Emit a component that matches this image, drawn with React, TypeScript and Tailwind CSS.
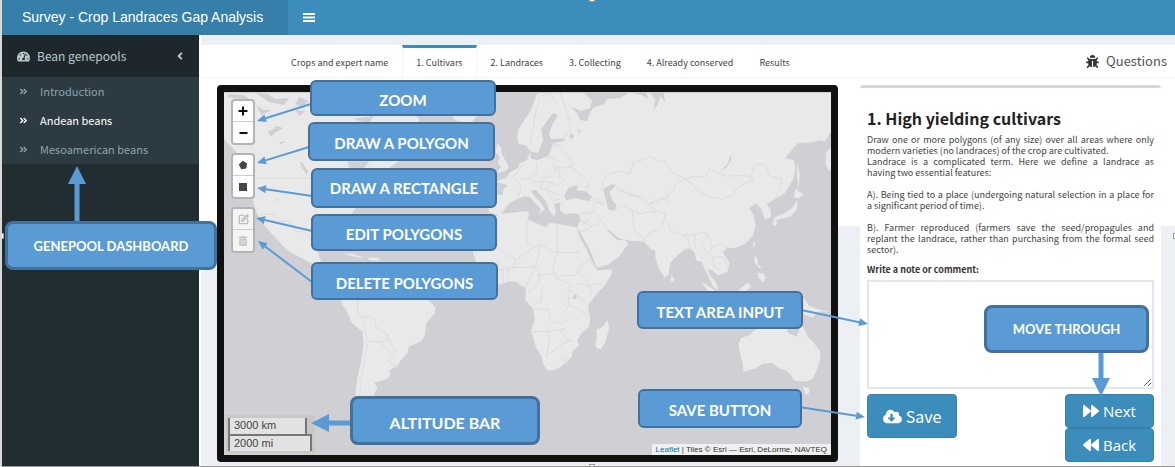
import type { ReactNode } from 'react';
import { SquarePen } from 'lucide-react';
import {
  FaAngleDoubleRight,
  FaAngleLeft,
  FaBackward,
  FaBug,
  FaCloudDownloadAlt,
  FaForward,
  FaTachometerAlt,
  FaTrashAlt,
} from 'react-icons/fa';

const land = [
  // North America
  'M224 93H400L420 120L400 160L380 175L353 212L350 225L340 235L325 238L318 250L322 262L330 270L322 268L303 258L293 253L287 249L275 236L265 225L257 212L253 197L252 175L240 155L224 138Z',
  'M269 223L274 226L279 234L288 246L284 244L277 235Z',
  'M430 85L485 93L482 108L476 118L470 124L455 120Z',
  'M343 253L352 253L364 257L358 257Z',
  'M368 257L378 257L382 260L370 260Z',
  // South America
  'M342 300L343 305L346 308L352 322L363 331L364 343L362 358L358 376L356 392L358 405L373 405L375 392L378 388L375 382L388 378L391 374L389 370L398 365L401 360L408 352L409 346L421 341L425 335L427 322L435 313L436 307L432 303L425 296L400 288L360 284L348 290Z',
  // Eurasia
  'M537 93L534 102L530 112L523 122L518 130L517 138L519 144L526 145L530 151L527 160L520 163L518 168L510 172L506 178L499 180L497 182L508 185L503 190L503 195L494 194L488 198L489 212L500 215L505 209L509 203L517 199L524 196L530 197L536 204L541 209L539 214L545 209L541 203L534 195L531 190L536 190L541 196L546 201L549 210L554 216L556 211L554 204L560 202L560 210L565 214L572 213L579 214L580 220L577 227L581 234L590 250L595 263L597 267L608 264L619 256L628 243L624 239L617 240L613 236L606 229L610 230L617 237L627 240L643 241L650 248L655 250L655 257L658 267L664 277L668 274L670 262L678 254L686 248L690 248L694 252L696 260L701 261L706 272L712 285L718 291L716 283L709 274L707 268L712 270L718 275L727 271L729 262L722 252L727 247L734 248L745 243L752 235L755 226L753 215L749 208L755 203L761 209L764 219L770 217L770 210L766 204L775 198L784 193L793 178L795 166L793 160L784 158L791 150L797 143L812 142L818 140L824 141L831 131V93Z',
  // Africa
  'M500 214L507 213L525 211L529 212L528 219L534 222L546 227L549 223L556 223L564 225L577 227L579 236L586 248L590 257L597 270L611 269L612 272L606 283L597 293L589 303L588 309L590 317L589 326L581 333L577 340L579 345L573 350L571 357L561 366L555 369L547 370L543 363L541 355L536 347L531 330L535 318L533 308L525 299L526 288L521 285L516 281L510 281L500 284L491 281L478 266L473 252L477 240L484 226L494 217Z',
  'M607 319L609 327L605 342L601 348L597 348L595 344L597 336L596 329L603 326Z',
  // British Isles
  'M497 143L501 147L502 154L506 161L509 167L505 171L496 173L501 167L498 162L500 157L496 152Z',
  // East and South-East Asia
  'M795 188L799 192L803 194L798 198L793 197Z',
  'M797 199L796 209L790 216L779 219L773 221L774 217L784 213L791 208Z',
  'M773 220L777 222L774 226L772 224Z',
  'M797 161L799 174L798 189L796 175Z',
  'M831 145L825 154L825 164L828 171L831 168Z',
  'M754 241L755 243L753 247L752 244Z',
  'M754 255L757 258L757 264L762 267L758 267L754 262Z',
  'M757 272L763 273L765 277L763 282L758 278Z',
  'M671 274L674 279L672 282L670 280Z',
  'M700 281L706 284L716 291H708Z',
  'M737 290L748 282L750 287L745 291Z',
  'M803 297L808 305L818 309L829 311L818 311L812 317L803 314Z',
  // Australia
  'M738 342L741 337L750 334L753 330L758 327L763 328L769 326L786 327L787 332L796 336L800 325L803 327L807 336L813 342L819 350L820 357L817 367L812 378L805 381L794 380L790 374L786 370L779 368L771 362L762 363L754 368L743 371L742 362L739 351Z',
  'M802 386L809 387L808 393L805 394Z',
];

const water = [
  'M584 93H628L620 98L607 99L604 104L593 108L589 114L587 121L580 120L577 113L571 107L581 111L590 108L592 101Z',
  'M633 93H646L648 99L641 95Z',
  'M650 93H663L665 103L660 96L657 105L653 110L655 100Z',
  'M553 113L558 115L552 125L549 134L551 139L565 138L564 141L553 143L551 149L548 156L537 160L531 158L530 151L538 153L543 140L541 129L547 121Z',
  'M564 196L568 188L575 185L578 186L576 190L586 191L592 197L588 201L576 198L566 200Z',
  'M603 189L611 184L616 185L609 192L612 200L616 205L614 211L608 209L606 201Z',
  'M720 170L727 164L730 155L731 159L726 167Z',
  'M571 133L574 136L572 139L569 137Z',
  'M578 129L581 131L579 134Z',
  'M574 294L577 294L576 299L572 298Z',
  'M230 94L244 95L250 99L240 99L228 97Z',
  'M256 93L268 94L276 99L290 98L284 105L270 102Z',
  'M300 97L309 101L303 108L296 104Z',
  'M268 132L274 129L277 126L284 128L277 132L272 136Z',
  'M280 142L287 141L281 144Z',
  'M257 105L264 110L272 110L262 115Z',
  'M296 110L306 111L300 116Z',
  'M301 161L304 164L309 172L306 173L302 167Z',
  'M354 119L374 116L370 124Z',
  'M348 161L370 161L364 168H350Z',
];

const borders = [
  'M255 178H311M260 214L274 214L280 221L290 221L297 231L306 232L312 240',
  'M301 161L304 170L308 175M277 199L280 202',
  'M537 93L540 101L536 111L534 122L532 134L530 145M540 96L550 94L557 104M560 93L565 106L569 120L571 130L563 137',
  'M551 145L560 145L563 152L568 156L573 163L570 167L558 167L553 169M547 156L554 158L560 162M537 162L536 172L541 178L551 176L556 171L553 162',
  'M521 166L518 172L512 177L520 183L521 189L518 198M536 172L530 178L520 179M530 178L534 182L543 181L551 182L558 185L564 180L558 176M543 181L540 188L548 190L555 193L563 195M551 182L547 187L549 195L553 200L560 199M570 167L576 170L584 178L589 183L586 189M558 167L560 175',
  'M553 203L560 203L564 206M580 214L588 212L594 211L593 203L598 202L604 205M588 201L596 199L600 203L605 202M580 220L586 223L592 226L599 224M588 212L590 218L583 224M594 211L600 218L606 228M592 226L585 230L578 232',
  'M603 189L602 180L610 173L618 171L630 173L633 162L645 159L650 156L658 161L664 161L672 172L685 179M685 179L676 183L673 190L665 197L655 200L648 204M616 189L628 193L640 197L648 204L656 210L665 213L664 219L662 224L656 230L648 233L643 241',
  'M614 210L622 205L632 210L640 214L648 211L656 212M632 210L633 225L635 231L643 238M640 197L632 196L621 189M648 204L657 201L668 196M665 197L670 204',
  'M685 179L695 176L705 177L709 168L718 174L728 176L738 175L748 176L753 180L745 183L735 189L733 195L722 199L710 197L698 191L692 184Z',
  'M750 176L755 164L764 164L770 176L781 179L780 188L775 198M664 219L668 224L670 230L682 235L694 234L704 232L708 236L700 244L706 251L701 259M682 235L688 238L689 246M694 234L695 248M708 236L712 246L720 244L727 247M706 251L712 257L722 256L727 264M712 246L708 254M712 257L713 266L719 269',
  'M497 217L498 240L497 248L516 259L534 247L527 243L527 220M557 223V243L557 252H580M534 247L540 244L557 253M540 244L538 258L535 267L540 273M515 260L514 267L500 269L497 260M514 267L528 267L535 265M557 252L553 268L556 277L571 284M535 267L528 281L525 289M540 273L538 284L528 292M538 275L556 273M556 277L563 275L576 275L580 265L589 259L597 270M577 271L590 284L602 283M576 283L590 286L591 295M571 284L568 293L569 305L563 312M543 286L541 300L533 305M533 308L548 309L551 321L563 323L569 318M531 331L549 331L556 329L566 328M549 331V343L546 355L552 351L563 343L571 340M560 328L566 339L574 340M569 305L578 308L589 317M570 289L588 305M503 269V283M508 268V282',
  'M561 357L565 355L567 358L563 361Z',
  'M357 309L362 317L369 315L375 318L376 326L387 333L388 340L380 341L370 341L367 336L365 326L363 317M358 309L358 300L368 297M387 333L393 345L397 349L388 360M388 360L398 366M380 341L391 352L396 349M368 342L365 360L362 375L360 395',
];

function WorldMap() {
  return (
    <svg viewBox="224 92 607 362" preserveAspectRatio="xMidYMid slice" className="absolute inset-0 h-full w-full" aria-hidden="true">
      <rect x="0" y="0" width="1200" height="600" fill="#d0cfd3" />
      <g fill="#e9e9e9">{land.map((d) => <path key={d} d={d} />)}</g>
      <g fill="#d0cfd3">{water.map((d) => <path key={d} d={d} />)}</g>
      <g fill="none" stroke="#dadadb" strokeWidth="0.9" strokeLinejoin="round">{borders.map((d) => <path key={d} d={d} />)}</g>
    </svg>
  );
}

function Callout({ className, children }: { className: string; children: ReactNode }) {
  return (
    <div className={`absolute z-20 flex items-center justify-center border-[#41719c] bg-[#5b9bd5] font-[Lato,sans-serif] font-bold whitespace-nowrap text-white ${className}`}>
      {children}
    </div>
  );
}

/* Straight pointer with its head at (x2, y2). */
function Arrow({ x1, y1, x2, y2 }: { x1: number; y1: number; x2: number; y2: number }) {
  const len = Math.hypot(x2 - x1, y2 - y1);
  const ux = (x2 - x1) / len;
  const uy = (y2 - y1) / len;
  const bx = x2 - ux * 9;
  const by = y2 - uy * 9;
  return (
    <g fill="#5b9bd5" stroke="#5b9bd5">
      <line x1={x1} y1={y1} x2={bx} y2={by} strokeWidth="2" />
      <path stroke="none" d={`M${x2} ${y2}L${bx - uy * 4} ${by + ux * 4}L${bx + uy * 4} ${by - ux * 4}Z`} />
    </g>
  );
}

function MapButtons({ children }: { children: ReactNode }) {
  return <div className="flex w-6 flex-col divide-y divide-[#ccc] overflow-hidden rounded border-2 border-[#b4b4b6] bg-white">{children}</div>;
}

const tool = 'flex h-[21px] w-full items-center justify-center';

function MapPanel() {
  return (
    <section aria-label="Map" className="relative mb-1 min-w-0 flex-1 rounded-sm border-[7px] border-[#111]">
      <div className="absolute inset-0 overflow-hidden">
        <WorldMap />
      </div>
      <div className="absolute top-[7px] left-[7px] flex flex-col gap-2">
        <MapButtons>
          <button aria-label="Zoom in" className={tool}>
            <svg width="10" height="10" viewBox="0 0 10 10" stroke="#111" strokeWidth="2"><path d="M0.5 5H9.5M5 0.5V9.5" /></svg>
          </button>
          <button aria-label="Zoom out" className={tool}>
            <svg width="10" height="10" viewBox="0 0 10 10" stroke="#111" strokeWidth="2"><path d="M1.5 5H9.5" /></svg>
          </button>
        </MapButtons>
        <MapButtons>
          <button aria-label="Draw a polygon" className={tool}>
            <svg width="10" height="10" viewBox="0 0 10 10" fill="#464646"><path d="M4.8 0.7L9.2 3.4L8.2 8.6L3.2 9.3L0.8 4.6Z" /></svg>
          </button>
          <button aria-label="Draw a rectangle" className={tool}>
            <svg width="8" height="8" viewBox="0 0 8 8" fill="#464646"><path d="M0 0H8V8H0Z" /></svg>
          </button>
        </MapButtons>
        <MapButtons>
          <button aria-label="Edit polygons" className={`${tool} bg-[#f4f4f4] text-[#bdbdbd]`}><SquarePen size={11} strokeWidth={3} /></button>
          <button aria-label="Delete polygons" className={`${tool} bg-[#f4f4f4] text-[#c4c4c4]`}><FaTrashAlt size={10} /></button>
        </MapButtons>
      </div>
      <div className="absolute bottom-[2px] left-[2px] bg-[#c8c8c8] p-[2px] pt-[3px] pr-[3px] font-['Liberation_Sans',sans-serif] text-[11px] leading-[15px] text-[#444]">
        <div className="h-4 w-[79px] border-x-2 border-[#777] bg-[#e2e2e2] pl-1">3000 km</div>
        <div className="h-[17px] w-[84px] border-2 border-b-0 border-[#777] bg-[#e2e2e2] pl-1">2000 mi</div>
      </div>
      <div className="absolute right-0 bottom-0 bg-[#f0f0f1] px-1 font-['Liberation_Sans',sans-serif] text-[8px] leading-[11px] whitespace-nowrap text-[#333]">
        <a href="#leaflet" className="text-[#0078a8]">Leaflet</a> | Tiles © Esri — Esri, DeLorme, NAVTEQ
      </div>

      <svg width="120" height="362" viewBox="224 92 120 362" className="pointer-events-none absolute top-0 left-0 z-10" aria-hidden="true">
        <Arrow x1={311} y1={104} x2={257} y2={121} />
        <Arrow x1={309} y1={147} x2={257} y2={163} />
        <Arrow x1={312} y1={196} x2={257} y2={188} />
        <Arrow x1={312} y1={231} x2={256} y2={218} />
        <Arrow x1={312} y1={282} x2={258} y2={241} />
      </svg>
      <svg width="46" height="20" viewBox="0 0 46 20" className="absolute bottom-[22px] left-[87px] z-10" fill="#5b9bd5" aria-hidden="true">
        <path d="M0 10L18 1V7.5H46V12.5H18V19Z" />
      </svg>
      <svg width="80" height="145" viewBox="791 300 80 145" className="pointer-events-none absolute right-[-40px] bottom-[9px] z-10" aria-hidden="true">
        <Arrow x1={801} y1={309} x2={868} y2={323} />
        <Arrow x1={799} y1={406} x2={865} y2={416} />
      </svg>

      <Callout className="top-[-12px] left-[86px] h-9 w-[186px] rounded-md border-2 pt-1 text-[15px]">ZOOM</Callout>
      <Callout className="top-[30px] left-[84px] h-[39px] w-[187px] rounded-md border-2 pt-1 text-[15px]">DRAW A POLYGON</Callout>
      <Callout className="top-[76px] left-[87px] h-10 w-[186px] rounded-md border-2 text-[15px]">DRAW A RECTANGLE</Callout>
      <Callout className="top-[122px] left-[87px] h-[37px] w-[186px] rounded-md border-2 pt-1 text-[15px]">EDIT POLYGONS</Callout>
      <Callout className="top-[170px] left-[87px] h-[38px] w-[187px] rounded-md border-2 pt-1 text-[15px]">DELETE POLYGONS</Callout>
      <Callout className="bottom-[10px] left-[126px] h-[49px] w-[190px] rounded-lg border-3 pt-1 text-[16px]">ALTITUDE BAR</Callout>
      <Callout className="right-[28px] bottom-[126px] h-[38px] w-[166px] rounded-md border-2 pt-1 text-[15px]">TEXT AREA INPUT</Callout>
      <Callout className="right-[29px] bottom-[27px] h-[39px] w-[164px] rounded-md border-2 pt-1 text-[15px]">SAVE BUTTON</Callout>
    </section>
  );
}

function QuestionPanel() {
  return (
    <section className="relative w-[301px] shrink-0 rounded-t-sm border-t-[3px] border-[#d2d6de] bg-white px-[7px] pt-[18px]">
      <h1 className="text-[16px] leading-6 font-bold text-[#222]">1. High yielding cultivars</h1>
      <div className="mt-1 text-justify text-[9px] leading-[11px] text-[#444]">
        <p>Draw one or more polygons (of any size) over all areas where only modern varieties (no landraces) of the crop are cultivated.</p>
        <p>Landrace is a complicated term. Here we define a landrace as having{'\u00a0'}two essential features:</p>
        <p className="mt-[11px]">A). Being tied to a place (undergoing natural selection in a place for a{'\u00a0'}significant period of time).</p>
        <p className="mt-[11px]">B). Farmer reproduced (farmers save the seed/propagules and replant the landrace, rather than purchasing from the formal seed sector).</p>
      </div>
      <label htmlFor="note" className="mt-2 block text-[9px] leading-[14px] font-bold text-[#333]">Write a note or comment:</label>
      <textarea id="note" className="mt-[3px] block h-[109px] w-full resize border-2 border-[#e4e5ee] bg-white p-1 text-[10px]" />
      <div className="flex items-start justify-between pt-[5px] pb-[4px]">
        <button className="flex h-11 w-[90px] items-center justify-center gap-1 rounded-sm border border-[#367fa9] bg-[#3c8dbc] text-[16px] text-white">
          <FaCloudDownloadAlt size={19} />Save
        </button>
        <div className="flex w-[89px] flex-col font-['Open_Sans',sans-serif] text-[15px] text-white">
          <button className="flex h-[34px] items-center justify-center gap-1 rounded-sm border border-[#367fa9] bg-[#3c8dbc]"><FaForward size={16} />Next</button>
          <button className="flex h-[34px] items-center justify-center gap-1 rounded-sm border border-[#367fa9] bg-[#3c8dbc]"><FaBackward size={16} />Back</button>
        </div>
      </div>
      <svg width="20" height="46" viewBox="0 0 20 46" className="pointer-events-none absolute right-[50px] bottom-[70px] z-10" fill="#5b9bd5" aria-hidden="true">
        <path d="M7.5 0H12.5V28H19L10 46L1 28H7.5Z" />
      </svg>
      <Callout className="right-3 bottom-[113px] h-12 w-[165px] rounded-lg border-3 pt-[2px] text-[13px]">MOVE THROUGH</Callout>
    </section>
  );
}

const tabs = ['Crops and expert name', '1. Cultivars', '2. Landraces', '3. Collecting', '4. Already conserved', 'Results'];
const items = ['Introduction', 'Andean beans', 'Mesoamerican beans'];

function Handle({ className }: { className: string }) {
  return <span className={`absolute z-30 h-[6px] w-[6px] border border-[#999] bg-white ${className}`} />;
}

export default function App() {
  return (
    <div className="relative overflow-hidden border-b-2 border-l-2 border-b-[#999] border-l-[#d8d8d8] bg-[#ecf0f5] font-['Noto_Sans_CJK_SC',sans-serif]">
      <header className="flex h-[35px] bg-[#3c8dbc] text-white">
        <div className="flex w-[286px] items-center bg-[#367fa9] pl-5 font-['Liberation_Sans',sans-serif] text-[14px] whitespace-nowrap">
          Survey - Crop Landraces Gap Analysis
        </div>
        <button aria-label="Toggle navigation" className="ml-[14px] px-px">
          <svg width="12" height="9" viewBox="0 0 12 9" fill="#fff"><path d="M0 0H12V2H0ZM0 3.5H12V5.5H0ZM0 7H12V9H0Z" /></svg>
        </button>
      </header>
      <div className="flex">
        <aside className="relative w-[197px] shrink-0 bg-[#222d32] text-[#b8c7ce]">
          <a href="#genepools" className="flex h-[42px] items-center bg-[#1e282c] pr-[13px] pl-[15px] text-[12px]">
            <FaTachometerAlt size={13} />
            <span className="ml-[7px] flex-1">Bean genepools</span>
            <FaAngleLeft size={12} />
          </a>
          <nav className="bg-[#2c3b41] text-[11px] text-[#8aa4af]">
            {items.map((item) => (
              <a key={item} href="#item" className={`flex h-[29px] items-center gap-3 pl-[17px] ${item === 'Andean beans' ? 'text-white' : ''}`}>
                <FaAngleDoubleRight size={9} />
                {item}
              </a>
            ))}
          </nav>
          <svg width="18" height="56" viewBox="0 0 18 56" className="absolute top-[131px] left-[66px] z-10" fill="#5b9bd5" aria-hidden="true">
            <path d="M9 0L18 18H11.5V56H6.5V18H0Z" />
          </svg>
          <Callout className="top-[186px] left-[3px] h-[49px] w-[212px] rounded-lg border-3 pt-[2px] text-[13px]">GENEPOOL DASHBOARD</Callout>
        </aside>
        <main className="min-w-0 flex-1 border-l-2 border-white pt-[10px]">
          <div className="bg-[linear-gradient(to_bottom,#ffffff_181px,#ecf0f5_181px)]">
            <div className="flex h-[33px] justify-between border-b border-[#f4f4f4]">
              <nav className="flex pl-[77px] text-[9px] whitespace-nowrap text-[#444]">
                {tabs.map((tab) => (
                  <button key={tab} className={`border-t-[3px] px-[13px] pt-px ${tab === '1. Cultivars' ? 'mx-px border-x border-x-[#f4f4f4] border-t-[#3c8dbc]' : 'border-transparent'}`}>
                    {tab}
                  </button>
                ))}
              </nav>
              <a href="#questions" className="flex items-center gap-[7px] pr-2 text-[13px] text-[#555]">
                <FaBug size={13} className="text-[#333]" />
                Questions
              </a>
            </div>
            <div className="flex gap-[22px] pt-[7px] pr-[14px] pl-4">
              <MapPanel />
              <QuestionPanel />
            </div>
          </div>
        </main>
      </div>
      <Handle className="-top-1 left-1/2" />
      <Handle className="-bottom-1 left-1/2" />
      <Handle className="top-1/2 -left-1" />
      <Handle className="top-1/2 -right-1" />
    </div>
  );
}
